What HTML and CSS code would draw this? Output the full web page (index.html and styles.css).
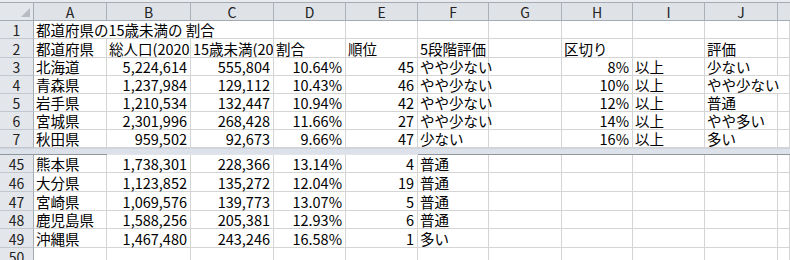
FILE: index.html
```html
<!DOCTYPE html>
<html lang="ja">
<head>
<meta charset="utf-8">
<link rel="stylesheet" href="styles.css">
</head>
<body>
<div class="topbar"></div>
<div class="sheet">
  <div class="c corner"><span class="tri"></span></div>
  <div class="c ch">A</div><div class="c ch">B</div><div class="c ch">C</div><div class="c ch">D</div><div class="c ch">E</div><div class="c ch">F</div><div class="c ch">G</div><div class="c ch">H</div><div class="c ch">I</div><div class="c ch">J</div><div class="c ch chk"></div>

  <div class="c rh">1</div>
  <div class="c t span3">都道府県の15歳未満の 割合</div><div class="c"></div><div class="c"></div><div class="c"></div><div class="c"></div><div class="c"></div><div class="c"></div><div class="c"></div><div class="c"></div>

  <div class="c rh">2</div>
  <div class="c t">都道府県</div><div class="c t clip">総人口(2020年)</div><div class="c t clip">15歳未満(2020年)</div><div class="c t">割合</div><div class="c t">順位</div><div class="c t">5段階評価</div><div class="c"></div><div class="c t">区切り</div><div class="c"></div><div class="c t">評価</div><div class="c"></div>

  <div class="c rh">3</div>
  <div class="c t">北海道</div><div class="c n">5,224,614</div><div class="c n">555,804</div><div class="c n">10.64%</div><div class="c n">45</div><div class="c t">やや少ない</div><div class="c"></div><div class="c n">8%</div><div class="c t">以上</div><div class="c t">少ない</div><div class="c"></div>

  <div class="c rh">4</div>
  <div class="c t">青森県</div><div class="c n">1,237,984</div><div class="c n">129,112</div><div class="c n">10.43%</div><div class="c n">46</div><div class="c t">やや少ない</div><div class="c"></div><div class="c n">10%</div><div class="c t">以上</div><div class="c t span2">やや少ない</div>

  <div class="c rh">5</div>
  <div class="c t">岩手県</div><div class="c n">1,210,534</div><div class="c n">132,447</div><div class="c n">10.94%</div><div class="c n">42</div><div class="c t">やや少ない</div><div class="c"></div><div class="c n">12%</div><div class="c t">以上</div><div class="c t">普通</div><div class="c"></div>

  <div class="c rh">6</div>
  <div class="c t">宮城県</div><div class="c n">2,301,996</div><div class="c n">268,428</div><div class="c n">11.66%</div><div class="c n">27</div><div class="c t">やや少ない</div><div class="c"></div><div class="c n">14%</div><div class="c t">以上</div><div class="c t">やや多い</div><div class="c"></div>

  <div class="c rh">7</div>
  <div class="c t">秋田県</div><div class="c n">959,502</div><div class="c n">92,673</div><div class="c n">9.66%</div><div class="c n">47</div><div class="c t">少ない</div><div class="c"></div><div class="c n">16%</div><div class="c t">以上</div><div class="c t">多い</div><div class="c"></div>

  <div class="band dark left"></div><div class="band mid"></div><div class="band dark right"></div>

  <div class="c rh">45</div>
  <div class="c t">熊本県</div><div class="c n">1,738,301</div><div class="c n">228,366</div><div class="c n">13.14%</div><div class="c n">4</div><div class="c t">普通</div><div class="c"></div><div class="c"></div><div class="c"></div><div class="c"></div><div class="c"></div>

  <div class="c rh">46</div>
  <div class="c t">大分県</div><div class="c n">1,123,852</div><div class="c n">135,272</div><div class="c n">12.04%</div><div class="c n">19</div><div class="c t">普通</div><div class="c"></div><div class="c"></div><div class="c"></div><div class="c"></div><div class="c"></div>

  <div class="c rh">47</div>
  <div class="c t">宮崎県</div><div class="c n">1,069,576</div><div class="c n">139,773</div><div class="c n">13.07%</div><div class="c n">5</div><div class="c t">普通</div><div class="c"></div><div class="c"></div><div class="c"></div><div class="c"></div><div class="c"></div>

  <div class="c rh">48</div>
  <div class="c t">鹿児島県</div><div class="c n">1,588,256</div><div class="c n">205,381</div><div class="c n">12.93%</div><div class="c n">6</div><div class="c t">普通</div><div class="c"></div><div class="c"></div><div class="c"></div><div class="c"></div><div class="c"></div>

  <div class="c rh">49</div>
  <div class="c t">沖縄県</div><div class="c n">1,467,480</div><div class="c n">243,246</div><div class="c n">16.58%</div><div class="c n">1</div><div class="c t">多い</div><div class="c"></div><div class="c"></div><div class="c"></div><div class="c"></div><div class="c"></div>

  <div class="c rh">50</div>
  <div class="c"></div><div class="c"></div><div class="c"></div><div class="c"></div><div class="c"></div><div class="c"></div><div class="c"></div><div class="c"></div><div class="c"></div><div class="c"></div><div class="c"></div>
</div>
</body>
</html>
```

FILE: styles.css
```css
* { box-sizing: border-box; }
html, body { margin: 0; padding: 0; background: #ffffff; overflow: hidden; }
body {
  width: 790px;
  height: 260px;
  font-family: "Noto Sans CJK JP", "Noto Sans", sans-serif;
  font-size: 14.5px;
  color: #000;
}
.topbar {
  height: 2px;
  background: #e9ebee;
}
.sheet {
  display: grid;
  grid-template-columns: 34px 73px 84px 83px 72px 72px 71px 73px 71px 72px 73px 1fr;
  grid-template-rows: 18px 18px 19px 18px 18px 18px 18px 18px 7px 18px 19px 19px 18px 19px 18px;
  border-top: 1px solid #a5abb3;
}
.c {
  border-right: 1px solid #d4d4d4;
  border-bottom: 1px solid #d4d4d4;
  display: flex;
  align-items: flex-end;
  white-space: nowrap;
  line-height: 16px;
  padding-bottom: 0px;
  min-width: 0;
}
.corner {
  background: #e3e6ea;
  border-right: 1px solid #a5abb3;
  border-bottom: 1px solid #a5abb3;
  position: relative;
}
.tri {
  position: absolute;
  right: 3px;
  bottom: 3px;
  width: 0;
  height: 0;
  border-left: 9px solid transparent;
  border-bottom: 9px solid #b8bcc2;
}
.ch {
  background: #dfe3e8;
  border-right: 1px solid #a9b0b8;
  border-bottom: 1px solid #a5abb3;
  justify-content: center;
  align-items: center;
  font-size: 14px;
  color: #222;
}
.chk { border-right: none; }
.rh {
  background: #e3e6ea;
  border-right: 1px solid #a5abb3;
  border-bottom: 1px solid #c3c8ce;
  justify-content: center;
  align-items: center;
  font-size: 14px;
  color: #222;
  padding-top: 1px;
}
.t {
  padding-left: 2px;
  justify-content: flex-start;
}
.n {
  padding-right: 3px;
  justify-content: flex-end;
}
.clip { overflow: hidden; }
.span3 { grid-column: span 3; }
.span2 { grid-column: span 2; }
.band {
  background: #dde2ea;
  border-top: 1px solid #cfd5de;
}
.band.dark { border-bottom: 1px solid #8f969e; }
.band.mid { border-bottom: 1px solid #e2e6ec; }
.band.left { grid-column: 1 / 3; }
.band.mid { grid-column: 3 / 7; }
.band.right { grid-column: 7 / 13; }
```
